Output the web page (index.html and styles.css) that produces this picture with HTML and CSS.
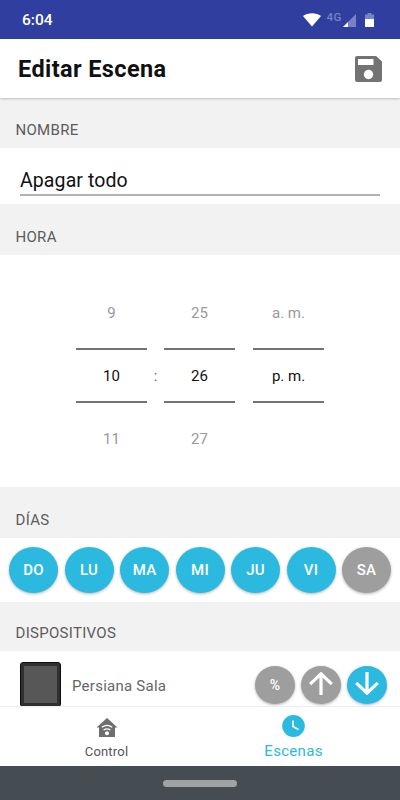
FILE: index.html
```html
<!DOCTYPE html>
<html lang="es">
<head>
    <meta charset="UTF-8">
    <meta name="viewport" content="width=device-width, initial-scale=1.0">
    <title>Editar Escena</title>
    <link rel="stylesheet" href="styles.css">
</head>
<body>

<div class="status-bar">
    <span class="clock">6:04</span>
    <svg class="wifi" width="18" height="14" viewBox="0 0 18 14"><path d="M0 3C5-.8 13-.8 18 3L9 13.6z" fill="#fff"/></svg>
    <span class="network">4G</span>
    <svg class="signal" width="13" height="13" viewBox="0 0 13 13"><path d="M0 13L13 0v13z" fill="#7882c4"/><path d="M0 13l5-5v5z" fill="#fff"/></svg>
    <svg class="battery" width="9" height="14" viewBox="0 0 9 14"><path d="M0 1.500h2.500V0h4v1.500H9V6H0z" fill="#7882c4"/><path d="M0 6h9v8H0z" fill="#fff"/></svg>
</div>

<header class="header">
    <h1>Editar Escena</h1>
    <svg width="27" height="26" viewBox="0 0 27 26"><path fill="#737373" d="M2 0h19l6 5.500V24q0 2-2 2H2q-2 0-2-2V2q0-2 2-2z"/><path d="M3 3h15.500v6H3z" fill="#fff"/><circle cx="13.500" cy="18.500" r="4.700" fill="#fff"/></svg>
</header>

<main class="content">
    <h2 class="label label-name">Nombre</h2>
    <section class="name">
        <div class="name-input">Apagar todo</div>
    </section>

    <h2 class="label">Hora</h2>
    <section class="picker">
        <div class="wheel">
            <span class="option">9</span>
            <span class="option selected">10</span>
            <span class="option">11</span>
        </div>
        <span class="colon">:</span>
        <div class="wheel">
            <span class="option">25</span>
            <span class="option selected">26</span>
            <span class="option">27</span>
        </div>
        <div class="wheel period">
            <span class="option">a. m.</span>
            <span class="option selected">p. m.</span>
            <span class="option"></span>
        </div>
    </section>

    <h2 class="label">Días</h2>
    <section class="days">
        <button class="day active">DO</button>
        <button class="day active">LU</button>
        <button class="day active">MA</button>
        <button class="day active">MI</button>
        <button class="day active">JU</button>
        <button class="day active">VI</button>
        <button class="day">SA</button>
    </section>

    <h2 class="label label-devices">Dispositivos</h2>
    <section class="device">
        <div class="blind"></div>
        <span class="device-name">Persiana Sala</span>
        <button class="action">%</button>
        <button class="action">
            <svg width="24" height="23" viewBox="0 0 24 23"><path d="M12 23V2M1.200 12.200L12 1.800l10.800 10.400" fill="none" stroke="#fff" stroke-width="3.200"/></svg>
        </button>
        <button class="action active">
            <svg width="24" height="23" viewBox="0 0 24 23"><path d="M12 0v21M1.200 10.800L12 21.200l10.800-10.400" fill="none" stroke="#fff" stroke-width="3.200"/></svg>
        </button>
    </section>
</main>

<nav class="tabs">
    <a class="tab">
        <svg width="22" height="19" viewBox="0 0 22 19"><path d="M11 0l10.500 9.500H19V19H3V9.500H.500z" fill="#6e6e6e"/><path d="M5.800 9.300q5.200-4 10.400 0M7.600 12.100q3.400-2.600 6.800 0" fill="none" stroke="#fff" stroke-width="1.300"/><circle cx="11" cy="15.200" r="2" fill="#fff"/></svg>
        <span>Control</span>
    </a>
    <a class="tab current">
        <svg width="23" height="22" viewBox="0 0 23 22"><ellipse cx="11.500" cy="11" rx="11.300" ry="10.900" fill="#2bb9e0"/><path d="M11 5.500v6l5.500 3" fill="none" stroke="#fff" stroke-width="1.700"/></svg>
        <span>Escenas</span>
    </a>
</nav>

<div class="system-bar"><div class="handle"></div></div>

</body>
</html>
```
FILE: styles.css
```css
* {
    box-sizing: border-box;
}

body {
    margin: 0;
    width: 400px;
    height: 800px;
    overflow: hidden;
    display: flex;
    flex-direction: column;
    font-family: Roboto, "Liberation Sans", sans-serif;
    background-color: #fff;
    color: #111;
}

h1, h2 {
    margin: 0;
}

button {
    border: none;
    padding: 0;
    font-family: inherit;
    color: #fff;
}

.status-bar {
    height: 39px;
    flex: none;
    display: flex;
    align-items: center;
    padding: 0 26px 0 22px;
    background-color: #303f9f;
    color: #fff;
}

.clock {
    flex: 1;
    font-size: 15.5px;
    font-weight: 500;
    padding-top: 1px;
}

.network {
    margin: 0 1px 5px 5px;
    font-size: 11.5px;
    font-weight: 500;
    line-height: 12px;
    letter-spacing: 0.6px;
    color: #7882c4;
}

.signal {
    margin-top: 1px;
}

.battery {
    margin-left: 9px;
}

.header {
    height: 59px;
    flex: none;
    display: flex;
    align-items: center;
    justify-content: space-between;
    padding: 0 18px;
    background-color: #fff;
    box-shadow: 0 1px 2px rgba(0, 0, 0, 0.22);
    z-index: 1;
}

h1 {
    padding-top: 1px;
    font-size: 23.5px;
    font-weight: 700;
    letter-spacing: 0.4px;
}

.content {
    height: 608px;
    flex: none;
    overflow: hidden;
}

.label {
    height: 51px;
    padding: 15px 15.5px 0;
    background-color: #f2f2f2;
    color: #5c5c5c;
    font-size: 15px;
    font-weight: 400;
    line-height: 36px;
    letter-spacing: 0.3px;
    text-transform: uppercase;
}

.label-name {
    height: 50px;
    padding-top: 14px;
}

.label-devices {
    height: 49px;
    padding-top: 13px;
}

.name {
    height: 56px;
    padding: 17px 20px 0;
}

.name-input {
    height: 31px;
    border-bottom: 2px solid #b2b2b2;
    font-size: 19.5px;
    line-height: 32px;
    letter-spacing: 0.1px;
}

.picker {
    height: 232px;
    padding: 26px 76px 0;
    display: flex;
}

.wheel {
    width: 71px;
}

.option {
    display: block;
    height: 63px;
    font-size: 15px;
    line-height: 65px;
    text-align: center;
    color: #999;
}

.option.selected {
    height: 55px;
    margin: 4px 0;
    border: solid #737373;
    border-width: 2px 0;
    line-height: 52px;
    color: #111;
}

.colon {
    width: 17px;
    padding-top: 68px;
    font-size: 15px;
    line-height: 55px;
    text-align: center;
    color: #666;
}

.period {
    margin-left: 18px;
}

.days {
    height: 64px;
    padding: 9px 9px 0;
    display: flex;
    justify-content: space-between;
}

.day {
    width: 49px;
    height: 46px;
    border-radius: 50%;
    background-color: #9e9e9e;
    box-shadow: 0 1px 3px rgba(0, 0, 0, 0.3);
    font-size: 15px;
    font-weight: 500;
    letter-spacing: 0.2px;
}

.active {
    background-color: #2bb9e0;
}

.device {
    height: 56px;
    padding: 11px 13px 0 20px;
    display: flex;
    align-items: flex-start;
}

.blind {
    width: 41px;
    height: 45px;
    border: 1px solid #0c0c0c;
    border-radius: 3px;
    background-color: #575757;
    box-shadow: inset 0 0 0 3px #303030;
}

.device-name {
    flex: 1;
    padding-left: 11px;
    font-size: 15px;
    line-height: 48px;
    letter-spacing: 0.25px;
    color: #666;
}

.action {
    width: 40px;
    height: 38px;
    margin: 4px 0 0 6px;
    display: flex;
    align-items: center;
    justify-content: center;
    border-radius: 50%;
    background-color: #9e9e9e;
    box-shadow: 0 1px 3px rgba(0, 0, 0, 0.3);
    font-size: 14px;
    font-weight: 500;
}

.action svg {
    margin-bottom: 4px;
}

.action.active {
    background-color: #2bb9e0;
}

.tabs {
    height: 60px;
    flex: none;
    display: flex;
    padding: 0 13px;
    border-top: 1px solid #eee;
    background-color: #fff;
}

.tab {
    flex: 1;
    display: flex;
    flex-direction: column;
    align-items: center;
    padding-top: 11px;
    font-size: 13px;
    line-height: 16px;
    letter-spacing: 0.2px;
    color: #555;
}

.tab span {
    margin-top: 7px;
}

.tab.current {
    padding-top: 8px;
    font-size: 15px;
    letter-spacing: 0.3px;
    color: #2bb9e0;
}

.tab.current span {
    margin-top: 6px;
}

.system-bar {
    height: 34px;
    flex: none;
    display: flex;
    align-items: center;
    justify-content: center;
    background-color: #454d52;
}

.handle {
    width: 74px;
    height: 7px;
    border-radius: 4px;
    background-color: #a0a3a3;
}
```
